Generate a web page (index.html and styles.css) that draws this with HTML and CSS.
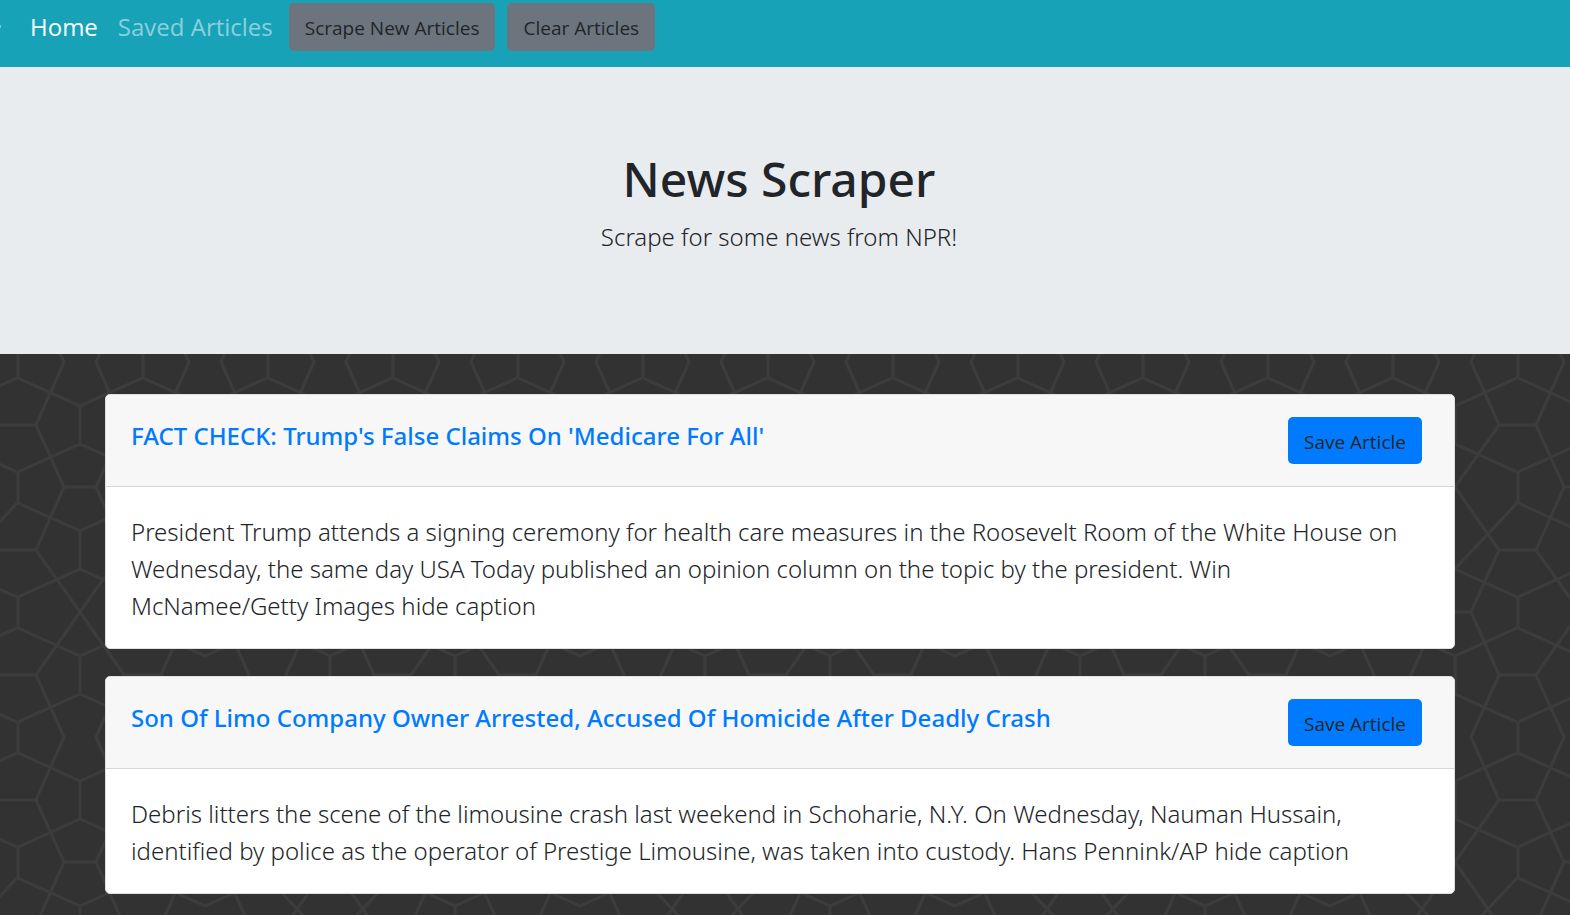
FILE: index.html
```html
<!DOCTYPE html>
<html lang="en">
<head>
<meta charset="utf-8">
<title>News Scraper</title>
<link rel="stylesheet" href="styles.css">
</head>
<body>
<nav class="navbar">
  <div class="nav-links">
    <a class="nav-link active" href="#">Home</a>
    <a class="nav-link" href="#saved">Saved Articles</a>
  </div>
  <div class="nav-actions">
    <button class="btn btn-secondary" type="button">Scrape New Articles</button>
    <button class="btn btn-secondary" type="button">Clear Articles</button>
  </div>
</nav>
<header class="jumbotron">
  <h1>News Scraper</h1>
  <p>Scrape for some news from NPR!</p>
</header>
<main class="articles">
  <article class="card">
    <div class="card-header">
      <h3><a href="#article-1">FACT CHECK: Trump's False Claims On 'Medicare For All'</a></h3>
      <button class="btn btn-primary" type="button">Save Article</button>
    </div>
    <p class="card-body">President Trump attends a signing ceremony for health care measures in the Roosevelt Room of the White House on Wednesday, the same day USA Today published an opinion column on the topic by the president. Win McNamee/Getty Images hide caption</p>
  </article>
  <article class="card">
    <div class="card-header">
      <h3><a href="#article-2">Son Of Limo Company Owner Arrested, Accused Of Homicide After Deadly Crash</a></h3>
      <button class="btn btn-primary" type="button">Save Article</button>
    </div>
    <p class="card-body">Debris litters the scene of the limousine crash last weekend in Schoharie, N.Y. On Wednesday, Nauman Hussain, identified by police as the operator of Prestige Limousine, was taken into custody. Hans Pennink/AP hide caption</p>
  </article>
</main>
</body>
</html>
```
FILE: styles.css
```css
* { box-sizing: border-box; }
body {
  margin: 0;
  min-height: 100vh;
  font-family: "Noto Sans", "Open Sans", sans-serif;
  font-size: 24px;
  font-weight: 300;
  line-height: 37px;
  color: #212529;
  background-color: #323232;
  background-image: url("data:image/svg+xml,%3Csvg xmlns='http://www.w3.org/2000/svg' width='375' height='375' fill='none' stroke='%233c3c3c' stroke-width='3'%3E%3Cdefs%3E%3Cpath id='a' d='M0 3L62 31M62 69L0 97M0 128L62 156M62 194L0 222M0 253L62 281M62 319L0 347M46-13L18 50L46 112L18 175L62 237L18 300L46 362L18 425'/%3E%3Cpath id='b' d='M0 3L62 31M62 69L0 97M0 128L62 156M62 194L0 222M0 253L62 281M62 319L0 347M46-13L18 50L46 112L18 175L46 237L18 300L46 362L18 425'/%3E%3Cpath id='c' d='M0 3L62 31M62 69L0 97M0 128L62 194M62 194L0 222M0 253L62 281M62 319L0 347M46-13L18 50L62 112L18 175L46 237L18 300L46 362L18 425'/%3E%3Cpath id='v' d='M0-28V3M0 97V128M0 222V253M0 347V378M-18 50H18M-18 175H18'/%3E%3C/defs%3E%3Cuse href='%23a' x='18'/%3E%3Cuse href='%23a' transform='translate(142 0) scale(-1 1)'/%3E%3Cuse href='%23b' x='143'/%3E%3Cuse href='%23b' transform='translate(267 0) scale(-1 1)'/%3E%3Cuse href='%23c' x='268'/%3E%3Cuse href='%23c' transform='translate(392 0) scale(-1 1)'/%3E%3Cuse href='%23c' transform='translate(17 0) scale(-1 1)'/%3E%3Cuse href='%23v' x='18'/%3E%3Cuse href='%23v' x='143'/%3E%3Cuse href='%23v' x='268'/%3E%3Cpath d='M0 300H36M125 300H161M80 31V69M80 156V194M80 281V319M205 31V69M330 31V69M330 281V319M64 112H96M189 112H221M189 237H221M314 237H346'/%3E%3C/svg%3E");
}
h1, h3, p { margin: 0; font-weight: 500; }
p { font-weight: 300; }
a { text-decoration: none; }
.navbar {
  position: relative;
  display: flex;
  align-items: flex-start;
  gap: 16px;
  padding: 3px 30px 16px;
  font-family: "Open Sans", "Noto Sans", sans-serif;
  font-weight: 400;
  background: #17a2b8;
}
.navbar::before {
  content: "";
  position: absolute;
  left: 0;
  top: 25px;
  width: 1px;
  height: 3px;
  background: rgba(255,255,255,.4);
}
.nav-links { display: flex; gap: 20px; padding: 5px 0 6px; }
.nav-actions { display: flex; gap: 12px; }
.nav-link { color: rgba(255,255,255,.5); }
.nav-link.active { color: #fff; }
.btn {
  height: 48px;
  padding: 2px 16px 0;
  border: 0;
  border-radius: 5px;
  font-family: "Open Sans", "Noto Sans", sans-serif;
  font-size: 19px;
  font-weight: 400;
  color: #212529;
  white-space: nowrap;
}
.btn-secondary { background: #6c757d; }
.btn-primary { height: 47px; background: #007bff; }
.jumbotron {
  padding: 81px 36px 99px 24px;
  text-align: center;
  background: #e9ecef;
}
.jumbotron h1 { margin-bottom: 8px; font-size: 48px; line-height: 62px; }
.articles { display: grid; gap: 27px; padding: 40px 115px 21px 105px; }
.card { background: #fff; border: 1px solid #dfdfdf; border-radius: 5px; overflow: hidden; }
.card-header {
  display: flex;
  justify-content: space-between;
  align-items: flex-start;
  padding: 22px 32px 22px 25px;
  background: #f7f7f7;
  border-bottom: 1px solid #d6d6d6;
}
.card-header h3 { font-size: 24px; line-height: 38px; }
.card-header a { color: #007bff; }
.card-body { padding: 26px 45px 24px 25px; }
```
